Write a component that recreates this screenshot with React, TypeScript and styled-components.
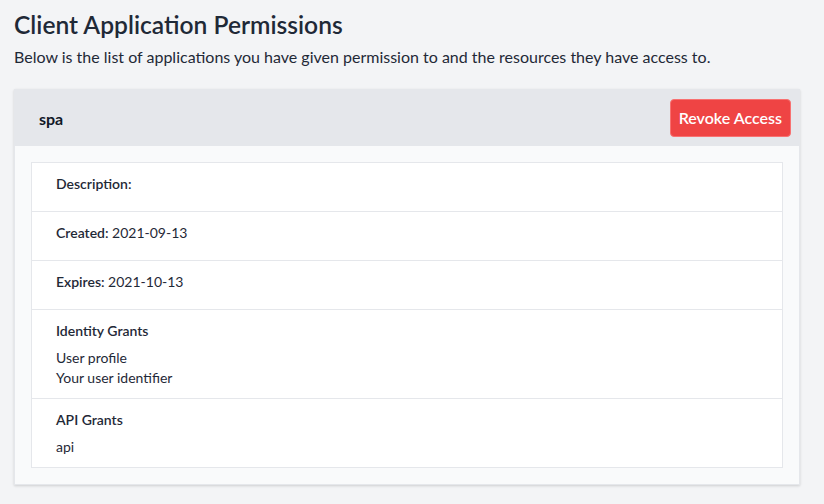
import React from "react";
import styled, { createGlobalStyle } from "styled-components";

const Global = createGlobalStyle`
  html, body { margin: 0; padding: 0; background: #f3f4f6; }
  body {
    font-family: "Lato", "Open Sans", "Liberation Sans", sans-serif;
    color: #1f2937;
  }
  * { box-sizing: border-box; }
`;

const Page = styled.main`
  padding: 9px 24px 16px 14px;
`;

const Title = styled.h1`
  margin: 0;
  font-size: 24.6px;
  line-height: 32px;
  font-weight: 600;
  color: #1f2937;
`;

const Lead = styled.p`
  margin: 4px 0 20px;
  font-size: 16px;
  line-height: 24px;
  color: #1f2937;
`;

const Card = styled.section`
  background: #f9fafb;
  border: 1px solid #e5e7eb;
  box-shadow: 0 1px 3px rgba(0, 0, 0, 0.1), 0 1px 2px rgba(0, 0, 0, 0.06);
`;

const CardHeader = styled.header`
  display: flex;
  align-items: center;
  justify-content: space-between;
  background: #e5e7eb;
  padding: 9px 8px 9px 24px;
`;

const AppName = styled.h2`
  margin: 0;
  font-size: 16px;
  font-weight: 700;
  color: #111827;
`;

const RevokeButton = styled.button`
  font-family: inherit;
  font-size: 16px;
  font-weight: 600;
  line-height: 24px;
  color: #ffffff;
  background: #ef4444;
  border: 1px solid #f87171;
  border-radius: 4px;
  padding: 6px 8px;
  height: 38px;
  cursor: pointer;
`;

const CardBody = styled.div`
  padding: 16px;
`;

const List = styled.ul`
  list-style: none;
  margin: 0;
  padding: 0;
  background: #ffffff;
  border: 1px solid #e5e7eb;
`;

const Row = styled.li`
  padding: 11px 24px 10px;
  font-size: 14px;
  line-height: 20px;
  & + & { border-top: 1px solid #e5e7eb; }
`;

const RowTitle = styled.div`
  font-weight: 600;
  margin-bottom: 7px;
`;

const Value = styled.span`
  font-weight: 400;
`;

const Item = styled.div``;

export default function App() {
  return (
    <>
      <Global />
      <Page>
        <Title>Client Application Permissions</Title>
        <Lead>
          Below is the list of applications you have given permission to and the resources they have access to.
        </Lead>
        <Card>
          <CardHeader>
            <AppName>spa</AppName>
            <RevokeButton>Revoke Access</RevokeButton>
          </CardHeader>
          <CardBody>
            <List>
              <Row>
                <RowTitle>Description:</RowTitle>
              </Row>
              <Row>
                <RowTitle>
                  Created: <Value>2021-09-13</Value>
                </RowTitle>
              </Row>
              <Row>
                <RowTitle>
                  Expires: <Value>2021-10-13</Value>
                </RowTitle>
              </Row>
              <Row>
                <RowTitle>Identity Grants</RowTitle>
                <Item>User profile</Item>
                <Item>Your user identifier</Item>
              </Row>
              <Row>
                <RowTitle>API Grants</RowTitle>
                <Item>api</Item>
              </Row>
            </List>
          </CardBody>
        </Card>
      </Page>
    </>
  );
}
